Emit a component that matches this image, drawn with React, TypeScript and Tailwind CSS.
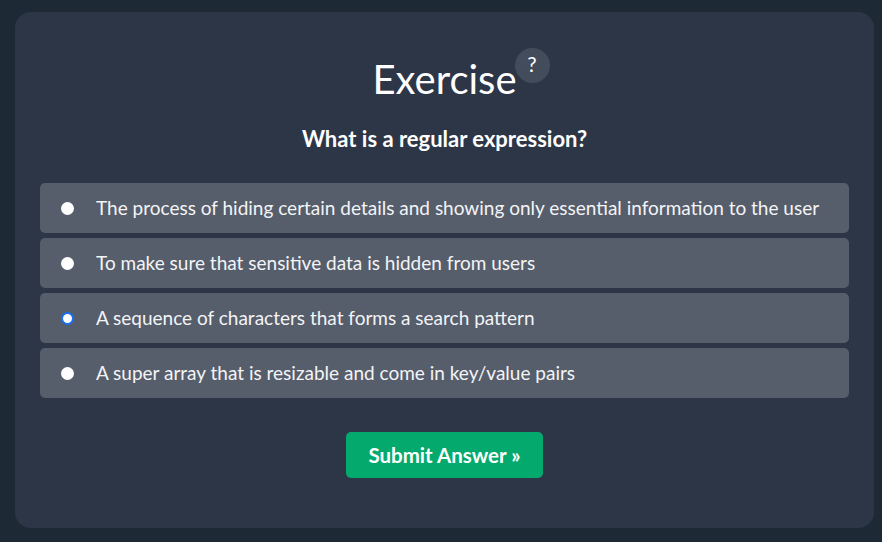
import { useState } from 'react';

const options = [
  'The process of hiding certain details and showing only essential information to the user',
  'To make sure that sensitive data is hidden from users',
  'A sequence of characters that forms a search pattern',
  'A super array that is resizable and come in key/value pairs',
];

const App = () => {
  const [selected, setSelected] = useState(2);

  return (
    <div
      className="w-[882px] h-[542px] bg-[#1d2a35] pt-[12px] px-[15px]"
      style={{ fontFamily: 'Lato, "Noto Sans", sans-serif' }}
    >
      <div className="w-[859px] h-[516px] bg-[#2d3647] rounded-[16px] px-[25px] pt-[39px] flex flex-col items-center text-white">
        {/* 제목 + 도움말 버튼 */}
        <div className="relative">
          <h1 className="text-[40px] leading-[56px] font-normal">Exercise</h1>
          <button className="absolute -right-[33px] -top-[3px] w-[35px] h-[35px] rounded-full bg-[#434c5b] text-white text-[21px] leading-none flex items-center justify-center pb-[4px]">
            ?
          </button>
        </div>

        <p className="mt-[18px] text-[22px] leading-[28px] font-bold">
          What is a regular expression?
        </p>

        <div className="w-full mt-[30px] flex flex-col gap-[5px]">
          {options.map((text, i) => (
            <label
              key={i}
              onClick={() => setSelected(i)}
              className="h-[50px] w-full bg-[#565d6b] rounded-[5px] flex items-center pl-[21px] cursor-pointer"
            >
              {selected === i ? (
                <span className="w-[13px] h-[13px] rounded-full bg-white border-2 border-[#1a6ff0]" />
              ) : (
                <span className="w-[13px] h-[13px] rounded-full bg-white" />
              )}
              <span className="ml-[22px] text-[19px] text-[#f3f4f6]">{text}</span>
            </label>
          ))}
        </div>

        <button className="mt-[34px] w-[197px] h-[46px] bg-[#04aa6d] rounded-[5px] text-white text-[20.5px] font-bold">
          Submit Answer »
        </button>
      </div>
    </div>
  );
};

export default App;
